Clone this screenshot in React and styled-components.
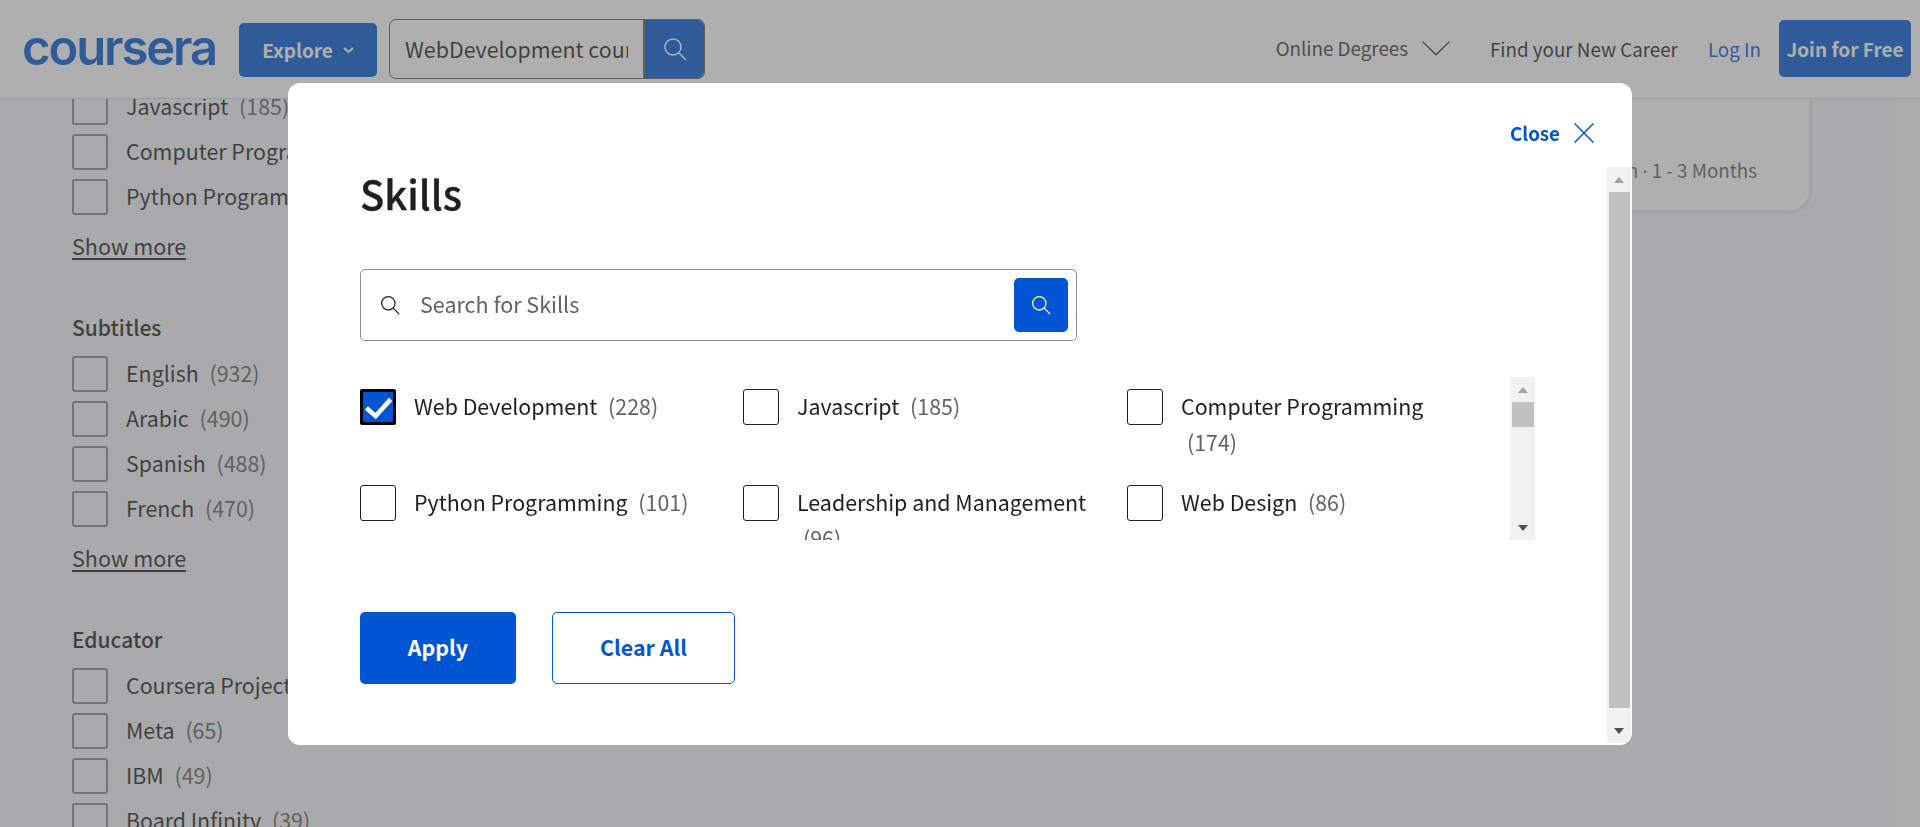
import React from "react";
import styled, { createGlobalStyle } from "styled-components";

const FONT = `"Noto Sans CJK SC", "Noto Sans", sans-serif`;

const Global = createGlobalStyle`
  html, body { margin: 0; height: 100%; overflow: hidden; background: #f4f5f8; }
  body { font-family: ${FONT}; color: #1f1f1f; }
  * { box-sizing: border-box; }
  input::placeholder { color: #636363; opacity: 1; }
`;

const Page = styled.div`
  height: 827px;
  display: flex;
  flex-direction: column;
  overflow: hidden;
`;

const Header = styled.header`
  position: relative;
  z-index: 2;
  flex: 0 0 99px;
  display: flex;
  align-items: center;
  padding: 0 9px 0 24px;
  background: #fff;
  border-bottom: 1px solid #d8dadc;
`;

const Logo = styled.span`
  flex: 0 0 193px;
  margin: -3px 0 0 -2px;
  font-family: Inter, sans-serif;
  font-size: 49px;
  line-height: 40px;
  font-weight: 600;
  letter-spacing: -2.1px;
  color: #0056d2;
  white-space: nowrap;
`;

const Explore = styled.button`
  width: 138px;
  height: 54px;
  margin: 2px 0 0 23px;
  display: flex;
  align-items: center;
  justify-content: center;
  gap: 10px;
  border: 0;
  border-radius: 5px;
  background: #0056d2;
  color: #fff;
  font: 600 19px/24px ${FONT};
`;

const HeaderSearch = styled.div`
  width: 316px;
  height: 60px;
  margin-left: 12px;
  display: flex;
  border: 1px solid #5e5e5e;
  border-radius: 7px;
  overflow: hidden;
`;

const HeaderInput = styled.input`
  flex: 1;
  min-width: 0;
  border: 0;
  outline: 0;
  padding: 0 15px;
  background: transparent;
  color: #1f1f1f;
  font: 400 21.4px/30px ${FONT};
`;

const HeaderSearchButton = styled.span`
  flex: 0 0 61px;
  display: flex;
  align-items: center;
  justify-content: center;
  background: #0056d2;
  border-left: 2px solid #5e5e5e;
`;

const NavDropdown = styled.span`
  margin-left: auto;
  display: flex;
  align-items: center;
  gap: 14px;
  margin-top: -2px;
  color: #3d3d3d;
  font: 400 18.8px/26px ${FONT};
`;

const NavLink = styled.span`
  margin-left: ${(p) => p.$gap}px;
  color: ${(p) => p.$color || "#1f1f1f"};
  font: 400 18.8px/26px ${FONT};
`;

const JoinButton = styled.button`
  width: 132px;
  height: 57px;
  margin-left: 18px;
  margin-top: -1px;
  border: 0;
  border-radius: 5px;
  background: #0056d2;
  color: #fff;
  font: 700 19px/24px ${FONT};
  white-space: nowrap;
  padding: 0;
`;

const Main = styled.main`
  flex: 1;
  min-height: 0;
  display: flex;
  overflow: hidden;
`;

const Sidebar = styled.aside`
  flex: 0 0 288px;
  margin-top: -10px;
  padding-left: 72px;
`;

const FilterSection = styled.section`
  margin-bottom: 54px;
`;

const FilterHeading = styled.h3`
  margin: 0 0 14px;
  padding-bottom: 2px;
  height: 28px;
  color: #1f1f1f;
  font: 500 21px/26px ${FONT};
`;

const FilterList = styled.div`
  display: flex;
  flex-direction: column;
  gap: 9px;
`;

const FilterItem = styled.div`
  display: flex;
  align-items: center;
  gap: 18px;
  height: 36px;
  white-space: nowrap;
  font: 400 21.4px/34px ${FONT};
`;

const SideBox = styled.span`
  flex: 0 0 36px;
  height: 36px;
  border: 2px solid #8b8b8b;
  border-radius: 3px;
`;

const FilterText = styled.span`
  margin-top: -2px;
`;

const Count = styled.span`
  display: inline-block;
  margin-left: 6px;
  color: #636363;
  white-space: nowrap;
`;

const ShowMore = styled.a`
  display: inline-block;
  margin-top: 19px;
  font: 400 21.6px/24px ${FONT};
  color: #1f1f1f;
  border-bottom: 2px solid #1f1f1f;
`;

const Results = styled.div`
  flex: 1;
  padding-right: 82px;
`;

const Gutter = styled.div`
  flex: 0 0 25px;
  background: #f8f9fb;
`;

const ResultCard = styled.article`
  height: 135px;
  margin-top: -20px;
  display: flex;
  align-items: flex-end;
  justify-content: flex-end;
  padding: 0 52px 24px 0;
  background: #fff;
  border: 4px solid #e6e7e9;
  border-radius: 24px;
  color: #636363;
  font: 400 18.8px/30px ${FONT};
  white-space: pre;
`;

const MetaDot = styled.span`
  font-family: "Noto Sans", sans-serif;
`;

const Overlay = styled.div`
  position: fixed;
  inset: 0;
  z-index: 5;
  padding-top: 1px;
  display: flex;
  align-items: center;
  justify-content: center;
  background: rgba(96, 96, 96, 0.5);
`;

const Modal = styled.div`
  position: relative;
  width: 1344px;
  height: 662px;
  padding: 35px 0 0 72px;
  display: flex;
  flex-direction: column;
  background: #fff;
  border-radius: 12px;
  overflow: hidden;
`;

const CloseRow = styled.div`
  height: 30px;
  padding-right: 38px;
  display: flex;
  align-items: center;
  justify-content: flex-end;
  gap: 14px;
  color: #0056d2;
  font: 600 18.8px/24px ${FONT};
`;

const Title = styled.h2`
  margin: 19px 0 0;
  color: #1f1f1f;
  font: 500 40px/52px ${FONT};
  -webkit-text-stroke: 0.35px #1f1f1f;
`;

const SearchBox = styled.div`
  width: 717px;
  height: 72px;
  margin-top: 50px;
  padding: 0 8px 0 19px;
  display: flex;
  align-items: center;
  gap: 20px;
  border: 1px solid #8f8f8f;
  border-radius: 5px;
`;

const SearchInput = styled.input`
  flex: 1;
  min-width: 0;
  border: 0;
  outline: 0;
  padding: 0 0 2px;
  color: #1f1f1f;
  font: 400 21.5px/30px ${FONT};
`;

const SearchButton = styled.span`
  flex: 0 0 54px;
  height: 54px;
  display: flex;
  align-items: center;
  justify-content: center;
  border-radius: 5px;
  background: #0056d2;
`;

const ListViewport = styled.div`
  position: relative;
  width: 1175px;
  height: 163px;
  margin-top: 36px;
  overflow: hidden;
`;

const SkillGrid = styled.div`
  display: grid;
  grid-template-columns: 383px 384px 383px;
  grid-auto-rows: 96px;
  padding-top: 12px;
`;

const SkillItem = styled.div`
  display: flex;
  align-items: flex-start;
  gap: 18px;
`;

const SkillBox = styled.span`
  flex: 0 0 36px;
  height: 36px;
  display: flex;
  align-items: center;
  justify-content: center;
  background: ${(p) => (p.$checked ? "#0056d2" : "#fff")};
  border: ${(p) => (p.$checked ? "3.5px solid #000" : "1.5px solid #1f1f1f")};
  border-radius: ${(p) => (p.$checked ? "2px" : "3px")};
`;

const SkillLabel = styled.span`
  max-width: 292px;
  margin-top: -1px;
  font: 400 21.4px/36px ${FONT};
  color: #1f1f1f;
`;

const Track = styled.div`
  position: absolute;
  top: ${(p) => p.$top}px;
  right: ${(p) => p.$right}px;
  bottom: ${(p) => p.$bottom}px;
  width: ${(p) => p.$width}px;
  background: #f1f1f1;
`;

const Thumb = styled.div`
  position: absolute;
  left: 2px;
  right: 1px;
  top: ${(p) => p.$top}px;
  height: ${(p) => p.$height}px;
  background: #c1c1c1;
`;

const Arrow = styled.span`
  position: absolute;
  left: 50%;
  margin-left: -5px;
  width: 0;
  height: 0;
  border-left: 5px solid transparent;
  border-right: 5px solid transparent;
  ${(p) =>
    p.$up
      ? "top: 10px; border-bottom: 6px solid #a3a3a3;"
      : "bottom: 9px; border-top: 6px solid #505050;"}
`;

const ActionRow = styled.div`
  display: flex;
  gap: 36px;
  margin-top: 72px;
`;

const ActionButton = styled.button`
  width: ${(p) => p.$width}px;
  height: 72px;
  padding: 0 0 2px;
  border-radius: 5px;
  border: ${(p) => (p.$primary ? "0" : "1.5px solid #0056d2")};
  background: ${(p) => (p.$primary ? "#0056d2" : "#fff")};
  color: ${(p) => (p.$primary ? "#fff" : "#0056d2")};
  font: 600 21.4px/28px ${FONT};
`;

const SearchGlyph = ({ size, color, stroke = 1.5 }) => (
  <svg width={size} height={size} viewBox="0 0 24 24" fill="none" stroke={color} strokeWidth={stroke}>
    <circle cx="10" cy="10" r="8" />
    <line x1="15.8" y1="15.8" x2="23" y2="23" />
  </svg>
);

const Chevron = ({ width, height, color, stroke }) => (
  <svg width={width} height={height} viewBox={`0 0 ${width} ${height}`} fill="none" stroke={color} strokeWidth={stroke}>
    <polyline points={`${stroke / 2},${stroke / 2} ${width / 2},${height - stroke} ${width - stroke / 2},${stroke / 2}`} />
  </svg>
);

const CloseGlyph = () => (
  <svg width="20" height="20" viewBox="0 0 20 20" fill="none" stroke="#0056d2" strokeWidth="1.5">
    <line x1="0.5" y1="0.5" x2="19.5" y2="19.5" />
    <line x1="19.5" y1="0.5" x2="0.5" y2="19.5" />
  </svg>
);

const Check = () => (
  <svg width="29" height="29" viewBox="0 0 29 29" fill="none" stroke="#fff" strokeWidth="4.6">
    <polyline points="2.4,15 11.6,23 26.6,6.4" />
  </svg>
);

const filters = [
  {
    items: [["Javascript", 185], ["Computer Programming", 174], ["Python Programming", 101]],
    more: true,
  },
  {
    title: "Subtitles",
    items: [["English", 932], ["Arabic", 490], ["Spanish", 488], ["French", 470]],
    more: true,
  },
  {
    title: "Educator",
    items: [["Coursera Project Network", 72], ["Meta", 65], ["IBM", 49], ["Board Infinity", 39]],
  },
];

const skills = [
  ["Web Development", 228, true],
  ["Javascript", 185],
  ["Computer Programming", 174],
  ["Python Programming", 101],
  ["Leadership and Management", 96],
  ["Web Design", 86],
];

export default function App() {
  return (
    <Page>
      <Global />
      <Header>
        <Logo>coursera</Logo>
        <Explore>
          Explore
          <Chevron width={11} height={7} color="#fff" stroke={2} />
        </Explore>
        <HeaderSearch>
          <HeaderInput readOnly value="WebDevelopment courses" />
          <HeaderSearchButton>
            <SearchGlyph size={24} color="#fff" />
          </HeaderSearchButton>
        </HeaderSearch>
        <NavDropdown>
          Online Degrees
          <Chevron width={28} height={15} color="#1f1f1f" stroke={1.2} />
        </NavDropdown>
        <NavLink $gap={40}>Find your New Career</NavLink>
        <NavLink $gap={30} $color="#0056d2">Log In</NavLink>
        <JoinButton>Join for Free</JoinButton>
      </Header>
      <Main>
        <Sidebar>
          {filters.map((group, i) => (
            <FilterSection key={i}>
              {group.title && <FilterHeading>{group.title}</FilterHeading>}
              <FilterList>
                {group.items.map(([name, n]) => (
                  <FilterItem key={name}>
                    <SideBox />
                    <FilterText>
                      {name} <Count>({n})</Count>
                    </FilterText>
                  </FilterItem>
                ))}
              </FilterList>
              {group.more && <ShowMore>Show more</ShowMore>}
            </FilterSection>
          ))}
        </Sidebar>
        <Results>
          <ResultCard>
            <span>Specialization <MetaDot>·</MetaDot> 1 - 3 Months</span>
          </ResultCard>
        </Results>
        <Gutter />
      </Main>
      <Overlay>
        <Modal>
          <CloseRow>
            Close
            <CloseGlyph />
          </CloseRow>
          <Title>Skills</Title>
          <SearchBox>
            <SearchGlyph size={20} color="#1f1f1f" />
            <SearchInput placeholder="Search for Skills" readOnly />
            <SearchButton>
              <SearchGlyph size={20} color="#fff" />
            </SearchButton>
          </SearchBox>
          <ListViewport>
            <SkillGrid>
              {skills.map(([name, n, checked]) => (
                <SkillItem key={name}>
                  <SkillBox $checked={checked}>{checked && <Check />}</SkillBox>
                  <SkillLabel>
                    {name} <Count>({n})</Count>
                  </SkillLabel>
                </SkillItem>
              ))}
            </SkillGrid>
            <Track $top={0} $bottom={0} $right={0} $width={25}>
              <Arrow $up />
              <Thumb $top={25} $height={25} />
              <Arrow />
            </Track>
          </ListViewport>
          <ActionRow>
            <ActionButton $primary $width={156}>Apply</ActionButton>
            <ActionButton $width={183}>Clear All</ActionButton>
          </ActionRow>
          <Track $top={84} $bottom={2} $right={1} $width={24}>
            <Arrow $up />
            <Thumb $top={25} $height={516} />
            <Arrow />
          </Track>
        </Modal>
      </Overlay>
    </Page>
  );
}
